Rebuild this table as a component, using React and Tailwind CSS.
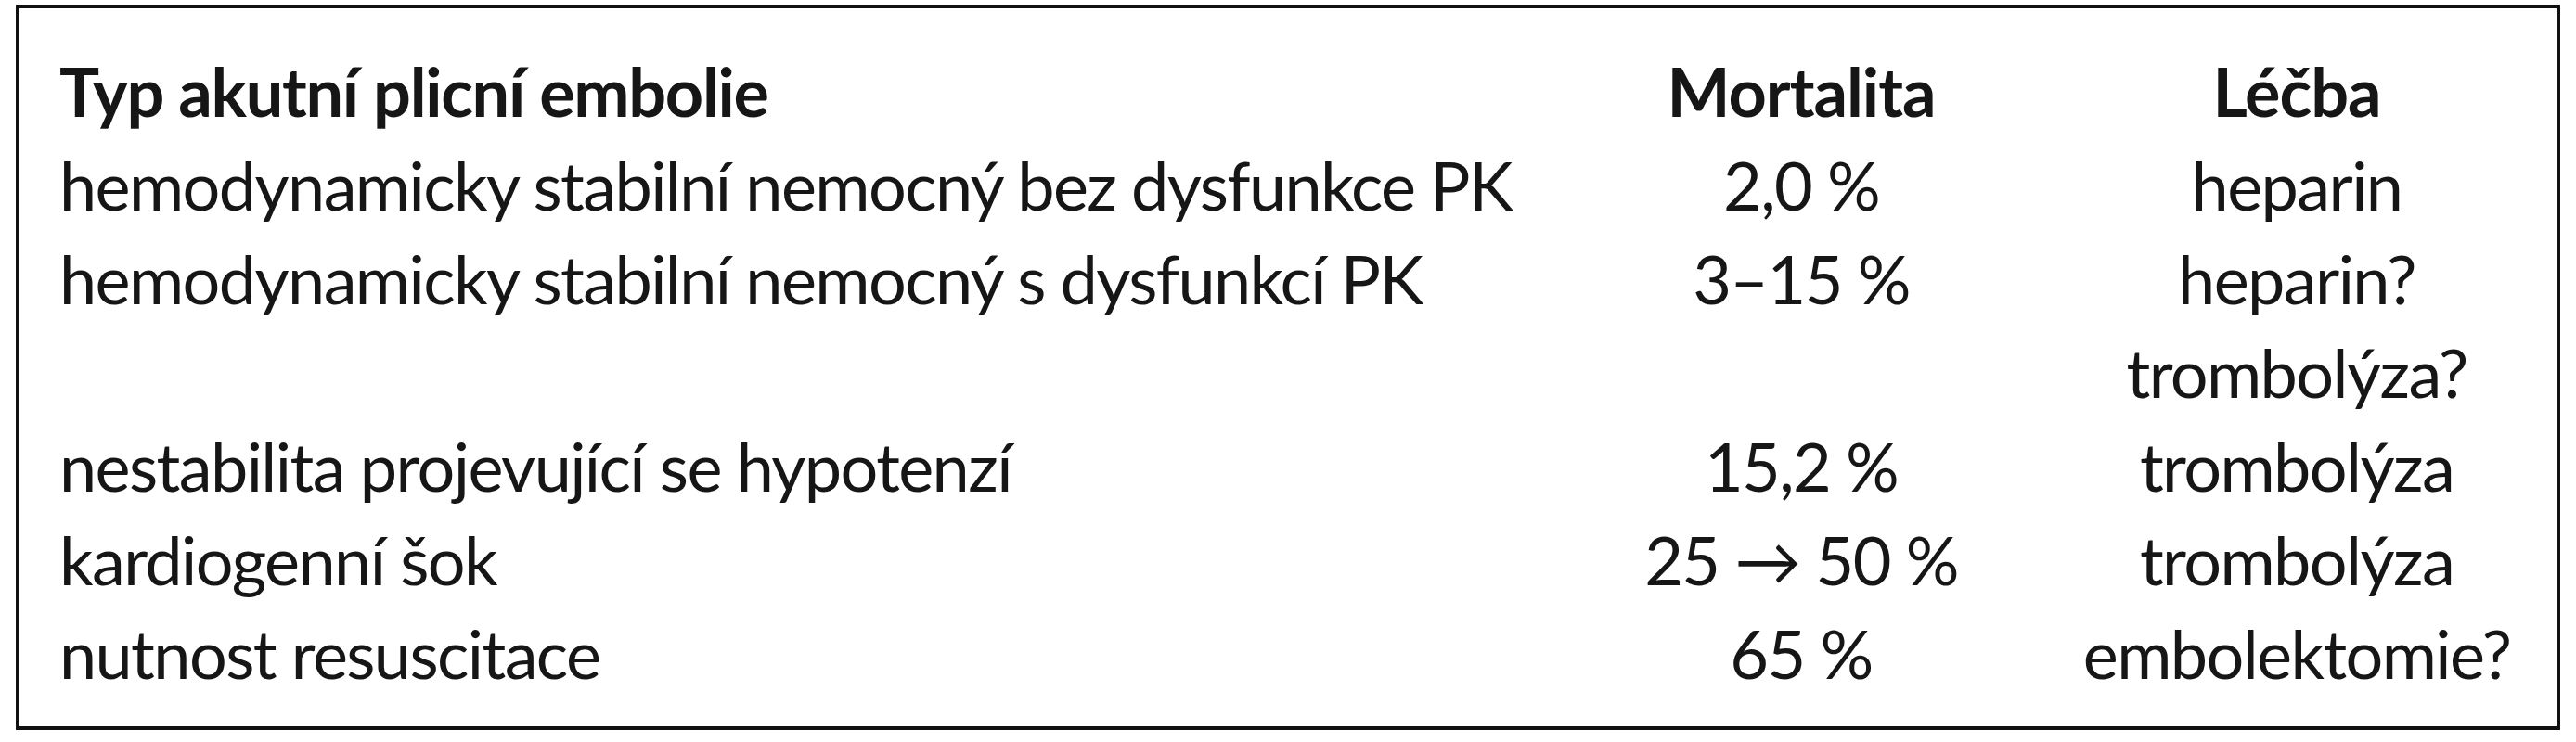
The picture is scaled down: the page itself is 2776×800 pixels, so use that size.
import React from 'react';

const rows = [
  { type: 'hemodynamicky stabilní nemocný bez dysfunkce PK', mort: '2,0 %', tx: ['heparin'] },
  { type: 'hemodynamicky stabilní nemocný s dysfunkcí PK', mort: '3–15 %', tx: ['heparin?', 'trombolýza?'] },
  { type: 'nestabilita projevující se hypotenzí', mort: '15,2 %', tx: ['trombolýza'] },
  { type: 'kardiogenní šok', mort: '25 → 50 %', tx: ['trombolýza'] },
  { type: 'nutnost resuscitace', mort: '65 %', tx: ['embolektomie?'] },
];

const App = () => {
  return (
    <div className="w-[2776px] h-[800px] bg-white pl-[17px] pt-[5px]">
      <div className="w-[2742px] h-[782px] border-[4px] border-[#111] pl-[43px] pt-[39px] font-[Lato,sans-serif] text-[72px] leading-[101px] tracking-[-1.6px] text-[#161616]">
        <div className="grid grid-cols-[1623px_508px_560px] items-start">
          <div className="font-bold tracking-[-1.3px] whitespace-nowrap">Typ akutní plicní embolie</div>
          <div className="font-bold tracking-[-1px] text-center">Mortalita</div>
          <div className="font-bold tracking-[-1px] text-center">Léčba</div>
          {rows.map((r) => (
            <React.Fragment key={r.type}>
              <div className="whitespace-nowrap">{r.type}</div>
              <div className="text-center whitespace-nowrap">{r.mort}</div>
              <div className="text-center">
                {r.tx.map((t) => (
                  <div key={t}>{t}</div>
                ))}
              </div>
            </React.Fragment>
          ))}
        </div>
      </div>
    </div>
  );
};

export default App;
